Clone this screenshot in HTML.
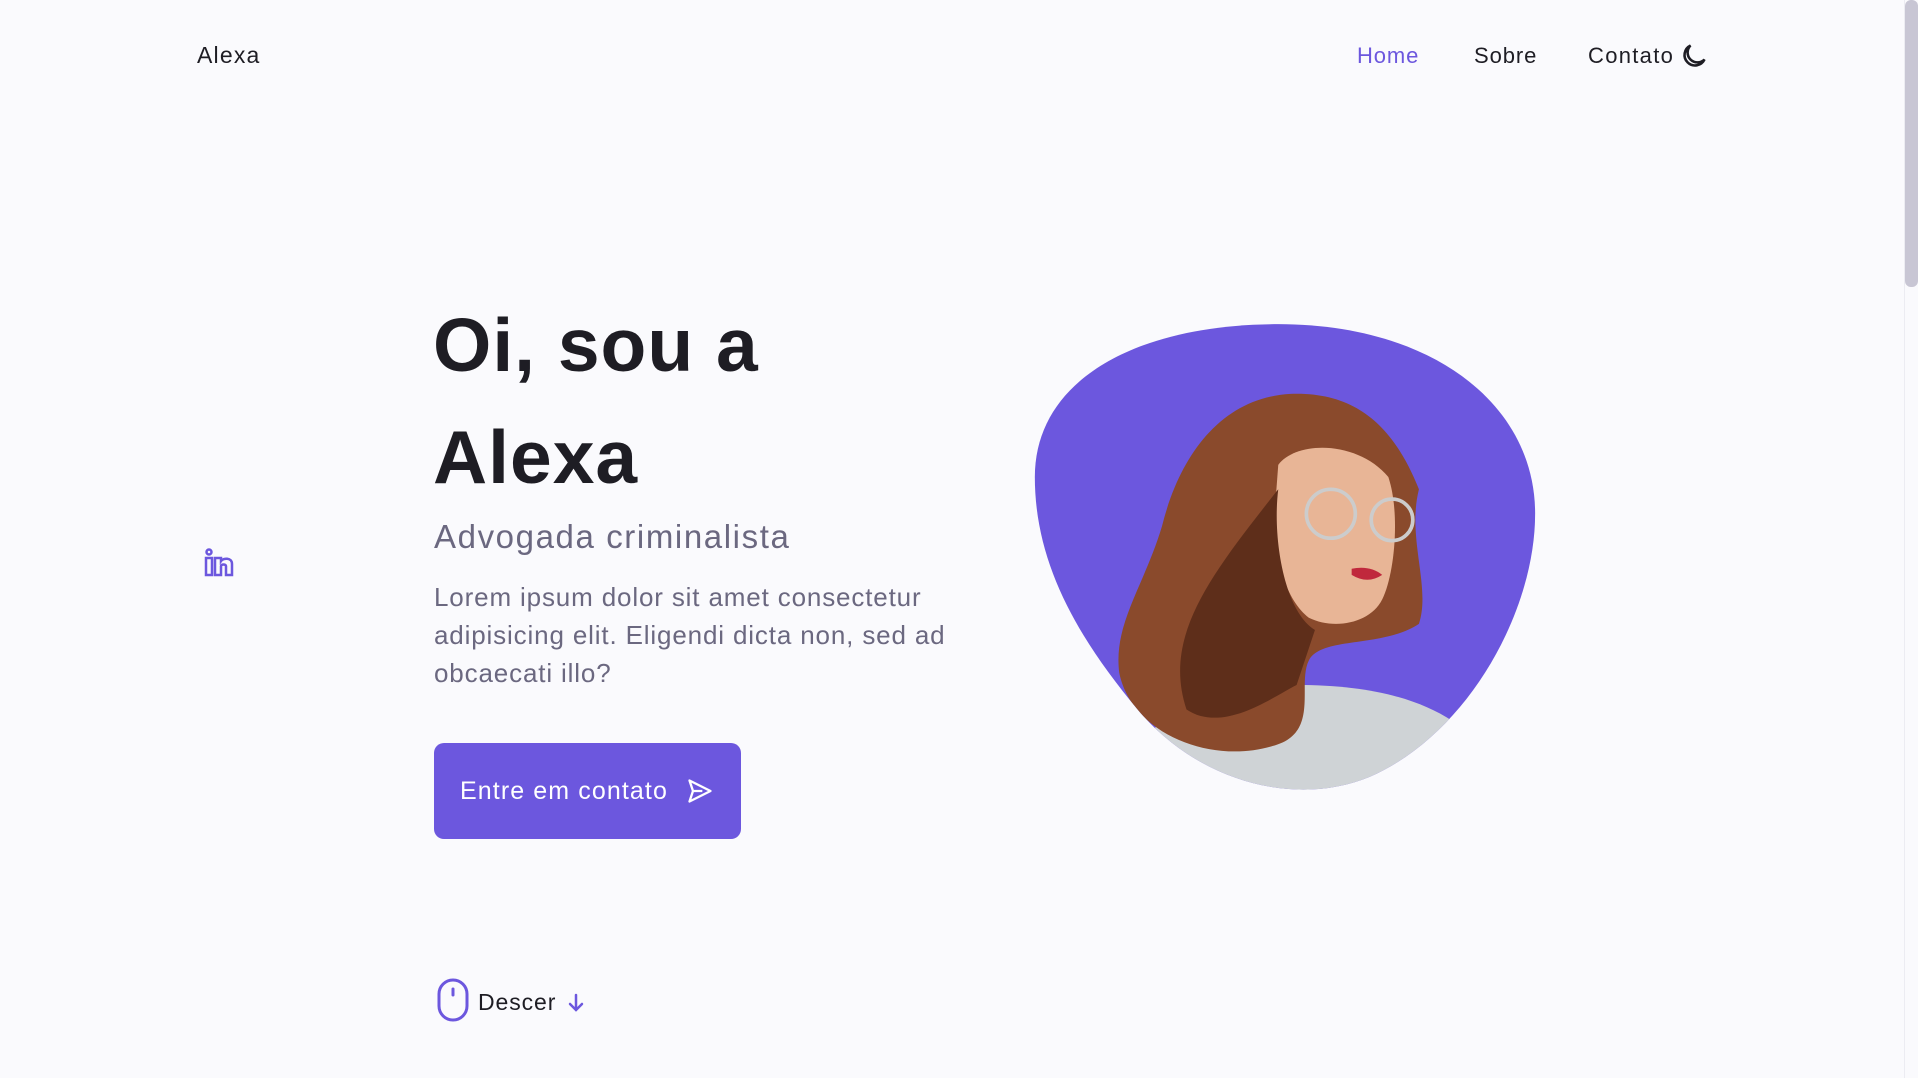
<!DOCTYPE html>
<html><head><meta charset="utf-8"><style>
*{margin:0;padding:0;box-sizing:border-box}
body{width:1918px;height:1078px;overflow:hidden;background:#fafafd;font-family:"Liberation Sans",sans-serif;position:relative;color:#1e1d24}
.a{position:absolute;white-space:nowrap}
.nav{font-size:22px;top:43px;letter-spacing:.9px}
</style></head><body>
<div class="a nav" style="left:197px;top:42px;font-size:23px;letter-spacing:1.2px">Alexa</div>
<div class="a nav" style="left:1357px;color:#6c57de">Home</div>
<div class="a nav" style="left:1474px">Sobre</div>
<div class="a nav" style="left:1588px;letter-spacing:1.3px">Contato</div>
<svg class="a" style="left:1680px;top:42px" width="28" height="28" viewBox="0 0 24 24" fill="none" stroke="#1e1d24" stroke-width="2.2" stroke-linecap="round"><path d="M9 3a9 9 0 1 0 12 12A8 8 0 0 1 9 3z"/></svg>
<div class="a" style="left:1905px;top:0;width:13px;height:287px;background:#c8c6d4;border-radius:6px"></div>
<div class="a" style="left:1904px;top:0;width:1px;height:1078px;background:#ececf2"></div>

<div class="a" style="left:433px;top:302px;font-size:75px;font-weight:bold;letter-spacing:1px">Oi, sou a</div>
<div class="a" style="left:433px;top:414px;font-size:75px;font-weight:bold;letter-spacing:1px">Alexa</div>
<div class="a" style="left:434px;top:518px;font-size:33px;color:#6b6880;letter-spacing:1.6px">Advogada criminalista</div>
<div class="a" style="left:434px;top:578px;font-size:26px;line-height:38px;color:#6b6880;letter-spacing:.85px">Lorem ipsum dolor sit amet consectetur<br>adipisicing elit. Eligendi dicta non, sed ad<br>obcaecati illo?</div>
<div class="a" style="left:434px;top:743px;width:307px;height:96px;background:#6c57de;border-radius:10px;color:#fff;font-size:25px;line-height:96px;padding-left:26px;letter-spacing:1.1px">Entre em contato
<svg style="position:absolute;left:252px;top:34px" width="28" height="28" viewBox="0 0 24 24" fill="none" stroke="#fff" stroke-width="2" stroke-linejoin="round"><path d="M3 3l18 9-18 9 3-9zM6 12h8"/></svg></div>

<svg class="a" style="left:204px;top:548px" width="32" height="30" viewBox="0 0 32 30" fill="none" stroke="#6c57de" stroke-width="2.5"><circle cx="5" cy="4" r="2.5"/><rect x="2" y="10" width="6" height="17"/><path d="M11 10h6v3c2-3 11-4 11 3v11h-6v-9c0-2-5-2-5 0v9h-6z"/></svg>

<svg class="a" style="left:436px;top:978px" width="34" height="44" viewBox="0 0 34 44" fill="none" stroke="#6c57de" stroke-width="3"><rect x="3" y="2" width="28" height="40" rx="14"/><line x1="17" y1="11" x2="17" y2="17" stroke-linecap="round"/></svg>
<div class="a" style="left:478px;top:989px;font-size:23px;letter-spacing:.9px">Descer</div>
<svg class="a" style="left:566px;top:992px" width="20" height="22" viewBox="0 0 20 22" fill="none" stroke="#6c57de" stroke-width="2.5" stroke-linecap="round"><path d="M10 3v15M4 12l6 6 6-6"/></svg>

<svg class="a" style="left:0;top:0" width="1918" height="1078" viewBox="0 0 1568 881.3">
<defs><clipPath id="c"><path d="M1045 265C1170 265 1255 330 1255 420C1255 500 1200 600 1120 635C1060 660 980 640 930 580C880 520 846 460 846 390C846 310 930 265 1045 265Z"/></clipPath></defs>
<path d="M1045 265C1170 265 1255 330 1255 420C1255 500 1200 600 1120 635C1060 660 980 640 930 580C880 520 846 460 846 390C846 310 930 265 1045 265Z" fill="#6c57de"/>
<g clip-path="url(#c)">
<path d="M900 650C920 600 980 560 1060 560C1140 560 1190 580 1220 620L1230 700H900Z" fill="#cfd3d6"/>
<path d="M1055 322C1000 325 965 370 950 430C935 480 910 510 915 550C925 600 990 625 1040 610C1080 600 1060 560 1070 540C1080 520 1130 530 1160 510C1170 480 1150 440 1160 400C1140 350 1110 320 1055 322Z" fill="#8a4a2c"/>
<path d="M1045 380C1060 360 1110 360 1135 390C1145 420 1140 470 1130 490C1120 510 1090 515 1070 505C1050 490 1040 450 1042 420Z" fill="#e8b596"/>
<path d="M1045 400C1040 440 1050 500 1075 515L1060 560C1040 570 1000 600 970 580C950 520 990 470 1045 400Z" fill="#5e2e1a"/>
<path d="M1105 465Q1120 462 1130 470Q1118 478 1105 470Z" fill="#c0283c"/>
<circle cx="1088" cy="420" r="20" fill="none" stroke="#ccc" stroke-width="3"/>
<circle cx="1138" cy="425" r="17" fill="none" stroke="#ccc" stroke-width="3"/>
</g>
</svg>
</body></html>
